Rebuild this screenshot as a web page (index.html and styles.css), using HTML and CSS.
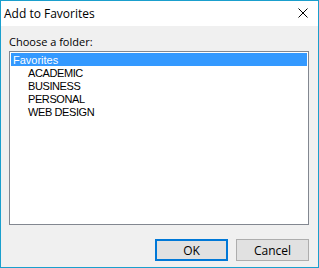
FILE: index.html
```html
<!DOCTYPE html>
<html lang="en">
<head>
    <meta charset="UTF-8">
    <title>Add to Favorites</title>
    <link rel="stylesheet" href="styles.css">
</head>
<body>
    <div class="dialog">
        <div class="titlebar">
            <span class="title">Add to Favorites</span>
            <svg class="close" width="10" height="10" viewBox="0 0 10 10">
                <path d="M0.5 0.5 L9.5 9.5 M9.5 0.5 L0.5 9.5" stroke="#000" stroke-width="1"/>
            </svg>
        </div>
        <div class="content">
            <p class="label">Choose a folder:</p>
            <div class="folders">
                <div class="row selected">Favorites</div>
                <div class="row child">ACADEMIC</div>
                <div class="row child">BUSINESS</div>
                <div class="row child">PERSONAL</div>
                <div class="row child">WEB DESIGN</div>
            </div>
            <div class="buttons">
                <button class="default">OK</button>
                <button>Cancel</button>
            </div>
        </div>
    </div>
</body>
</html>
```

FILE: styles.css
```css
body {
    margin: 0;
    padding: 0;
    font-family: "Open Sans", "Liberation Sans", sans-serif;
    color: #000;
}

.dialog {
    width: 317px;
    height: 266px;
    border: 1px solid #1a9fcd;
    background-color: #f0f0f0;
    display: flex;
    flex-direction: column;
}

.titlebar {
    height: 25px;
    background-color: #fff;
    display: flex;
    align-items: center;
    justify-content: space-between;
    padding: 0 10px 0 3px;
}

.title {
    font-size: 12px;
    margin-top: 0;
}

.close {
    margin-top: -2px;
}

.content {
    padding: 8px 9px 0 8px;
}

.label {
    margin: 0 0 1px 0;
    font-size: 11px;
    line-height: 16px;
}

.folders {
    height: 171px;
    width: 298px;
    border: 1px solid #828790;
    background-color: #fff;
    padding-top: 1px;
    font-family: "Liberation Sans", sans-serif;
    font-size: 11px;
}

.row {
    height: 13px;
    line-height: 14px;
    padding-left: 2px;
    margin: 0 1px;
    letter-spacing: -0.4px;
}

.row.selected {
    background-color: #3399ff;
    color: #fff;
    letter-spacing: 0;
}

.row.child {
    padding-left: 17px;
}

.buttons {
    display: flex;
    justify-content: flex-end;
    gap: 8px;
    margin-top: 14px;
}

button {
    width: 73px;
    height: 22px;
    font-family: "Open Sans", "Liberation Sans", sans-serif;
    font-size: 12px;
    background-color: #e1e1e1;
    border: 1px solid #adadad;
    padding: 0;
    color: #000;
}

button.default {
    border: 2px solid #0078d7;
}
```
